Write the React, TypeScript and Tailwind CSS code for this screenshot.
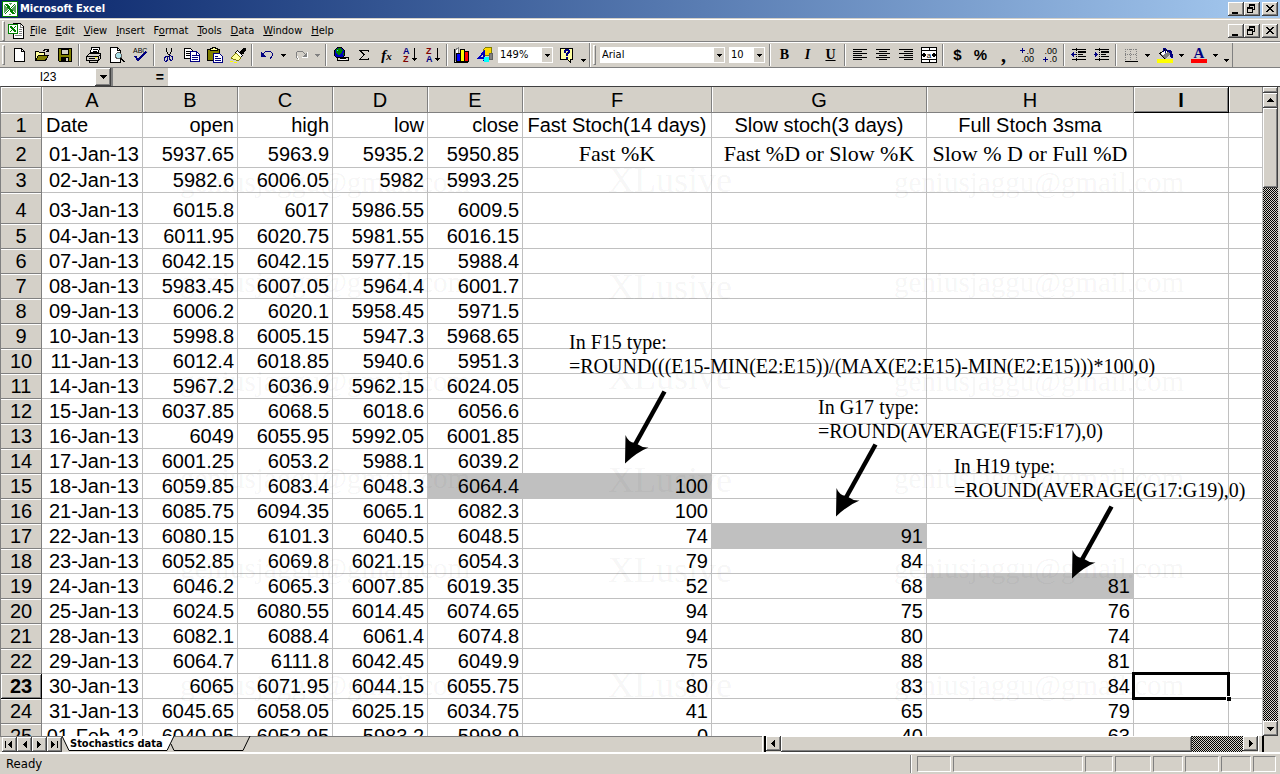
import * as React from "react"
import { clsx } from "clsx"

const RAISED =
  "bg-[#d4d0c8] shadow-[inset_-1px_-1px_0_#404040,inset_1px_1px_0_#fff,inset_-2px_-2px_0_#808080]"
const DITHER =
  "bg-[conic-gradient(#000_25%,#d4d0c8_0_50%,#000_0_75%,#d4d0c8_0)] bg-[length:2px_2px]"

/* ---------- sheet data ---------- */

const COLUMNS = ["A", "B", "C", "D", "E", "F", "G", "H", "I", ""]

const ROWS: string[][] = [
  ["Date", "open", "high", "low", "close", "Fast Stoch(14 days)", "Slow stoch(3 days)", "Full Stoch 3sma"],
  ["01-Jan-13", "5937.65", "5963.9", "5935.2", "5950.85", "Fast %K", "Fast %D or Slow %K", "Slow % D or Full %D"],
  ["02-Jan-13", "5982.6", "6006.05", "5982", "5993.25"],
  ["03-Jan-13", "6015.8", "6017", "5986.55", "6009.5"],
  ["04-Jan-13", "6011.95", "6020.75", "5981.55", "6016.15"],
  ["07-Jan-13", "6042.15", "6042.15", "5977.15", "5988.4"],
  ["08-Jan-13", "5983.45", "6007.05", "5964.4", "6001.7"],
  ["09-Jan-13", "6006.2", "6020.1", "5958.45", "5971.5"],
  ["10-Jan-13", "5998.8", "6005.15", "5947.3", "5968.65"],
  ["11-Jan-13", "6012.4", "6018.85", "5940.6", "5951.3"],
  ["14-Jan-13", "5967.2", "6036.9", "5962.15", "6024.05"],
  ["15-Jan-13", "6037.85", "6068.5", "6018.6", "6056.6"],
  ["16-Jan-13", "6049", "6055.95", "5992.05", "6001.85"],
  ["17-Jan-13", "6001.25", "6053.2", "5988.1", "6039.2"],
  ["18-Jan-13", "6059.85", "6083.4", "6048.3", "6064.4", "100"],
  ["21-Jan-13", "6085.75", "6094.35", "6065.1", "6082.3", "100"],
  ["22-Jan-13", "6080.15", "6101.3", "6040.5", "6048.5", "74", "91"],
  ["23-Jan-13", "6052.85", "6069.8", "6021.15", "6054.3", "79", "84"],
  ["24-Jan-13", "6046.2", "6065.3", "6007.85", "6019.35", "52", "68", "81"],
  ["25-Jan-13", "6024.5", "6080.55", "6014.45", "6074.65", "94", "75", "76"],
  ["28-Jan-13", "6082.1", "6088.4", "6061.4", "6074.8", "94", "80", "74"],
  ["29-Jan-13", "6064.7", "6111.8", "6042.45", "6049.9", "75", "88", "81"],
  ["30-Jan-13", "6065", "6071.95", "6044.15", "6055.75", "80", "83", "84"],
  ["31-Jan-13", "6045.65", "6058.05", "6025.15", "6034.75", "41", "65", "79"],
  ["01-Feb-13", "6040.95", "6052.95", "5983.2", "5998.9", "0", "40", "63"],
]

const SHADED = ["E15", "F15", "G17", "H19"]

/* ---------- small building blocks ---------- */

function Icon({ children, w = 16 }: { children: React.ReactNode; w?: number }) {
  return (
    <svg
      width={w}
      height={16}
      viewBox={`0 0 ${w} 16`}
      fill="none"
      stroke="#000"
      shapeRendering="crispEdges"
      className="shrink-0"
      aria-hidden="true"
    >
      {children}
    </svg>
  )
}

function Tool({ label, children }: { label: string; children: React.ReactNode }) {
  return (
    <button type="button" aria-label={label} className="flex h-[22px] w-[23px] shrink-0 items-center justify-center">
      {children}
    </button>
  )
}

function Sep() {
  return <div className="mx-[2px] h-[22px] w-[2px] shrink-0 border-l border-r border-l-[#808080] border-r-white" />
}

function Grip() {
  return <div className="ml-[2px] mr-[2px] h-5 w-[3px] shrink-0 border border-b-[#808080] border-l-white border-r-[#808080] border-t-white" />
}

function DownTriangle() {
  return (
    <svg width="5" height="3" viewBox="0 0 5 3" shapeRendering="crispEdges" aria-hidden="true">
      <path d="M0 0h5v1H0zM1 1h3v1H1zM2 2h1v1H2z" fill="currentColor" />
    </svg>
  )
}

function Drop({ label, muted }: { label: string; muted?: boolean }) {
  return (
    <button
      type="button"
      aria-label={label}
      className={clsx("flex h-[22px] w-[11px] shrink-0 items-center justify-center", muted && "text-[#808080]")}
    >
      <DownTriangle />
    </button>
  )
}

function More({ label }: { label: string }) {
  return (
    <button type="button" aria-label={label} className="flex h-[22px] w-[11px] shrink-0 items-end justify-center pb-1">
      <DownTriangle />
    </button>
  )
}

function Combo({ label, value, className }: { label: string; value: string; className: string }) {
  return (
    <div className={clsx("flex h-4 shrink-0 border border-white bg-white", className)}>
      <input
        aria-label={label}
        defaultValue={value}
        className="min-w-0 flex-1 bg-white pl-[1px] text-[11px] leading-[14px] outline-none"
      />
      <button type="button" aria-label={`${label} list`} className="flex w-[10px] items-center justify-center bg-[#d4d0c8]">
        <DownTriangle />
      </button>
    </div>
  )
}

function WindowButtons({ name }: { name: string }) {
  return (
    <div className="flex">
      <button type="button" aria-label={`Minimize ${name}`} className={clsx("h-[14px] w-4", RAISED)}>
        <svg width="16" height="14" shapeRendering="crispEdges">
          <path d="M4 10h6v2H4z" />
        </svg>
      </button>
      <button type="button" aria-label={`Restore ${name}`} className={clsx("h-[14px] w-4", RAISED)}>
        <svg width="16" height="14" shapeRendering="crispEdges" fill="none" stroke="#000">
          <path d="M5.500 5V2.500h5v5H9M5 3.500h6M3.500 5.500h5v5h-5zM3 6.500h6" />
        </svg>
      </button>
      <button type="button" aria-label={`Close ${name}`} className={clsx("ml-[2px] h-[14px] w-4", RAISED)}>
        <svg width="16" height="14" shapeRendering="crispEdges">
          <path d="M4 3h2v1h1v1h2V4h1V3h2v1h-1v1h-1v1H9v1h1v1h1v1h1v1h-2V9H9V8H7v1H6v1H4V9h1V8h1V7h1V6H6V5H5V4H4z" />
        </svg>
      </button>
    </div>
  )
}

function ExcelMark() {
  return (
    <svg width="16" height="16" viewBox="0 0 16 16" shapeRendering="crispEdges" className="shrink-0" aria-hidden="true">
      <path d="M0 0h16v16H0z" fill="#008000" />
      <path d="M1 1h14v14H1z" fill="#fff" />
      <path d="M2 2h12v12H2z" fill="#5fa05f" />
      <path d="M2 2h5l1 2 2-2h4v1l-4 5 4 5v1H9l-1-2-2 2H2v-1l4-5-4-5z" fill="#fff" />
      <path d="M3 3h3l7 10h-3zM12 3h1L4 13H3z" fill="#008000" />
    </svg>
  )
}

function DocumentMark() {
  return (
    <svg width="16" height="16" viewBox="0 0 16 16" shapeRendering="crispEdges" className="shrink-0" aria-hidden="true">
      <path d="M5.500.500h7l3 3v12h-10z" fill="#fff" stroke="#000" />
      <path d="M12.500 1v3H15M11 6.500h3M11 8.500h3M11 10.500h3M7 12.500h7" fill="none" stroke="#808080" />
      <path d="M0 1h10v10H0z" fill="#008000" />
      <path d="M1 2h8v8H1z" fill="#fff" />
      <path d="M2 3h2l4 5v1H6L2 4zM7 3h1L3 9H2z" fill="#008000" />
    </svg>
  )
}

/* ---------- toolbars ---------- */

function StandardToolbar() {
  return (
    <div role="toolbar" aria-label="Standard" className="flex items-center border-r border-r-[#808080]">
      <Grip />
      <Tool label="New">
        <Icon>
          <path d="M3.500 1.500h7l3 3v10h-10z" fill="#fff" />
          <path d="M10.500 1.500v3h3" />
        </Icon>
      </Tool>
      <Tool label="Open">
        <Icon>
          <path d="M1.500 13.500v-9h3l1 1h5v3" fill="#ffff9c" />
          <path d="M1.500 13.500l3-5h10l-3 5z" fill="#808000" />
          <path d="M9 3.500h1v-1h3v1h1v1M12 4.500h3M14.500 2v3" />
        </Icon>
      </Tool>
      <Tool label="Save">
        <Icon>
          <path d="M1.500 1.500h13v13h-12l-1-1z" fill="#808000" />
          <path d="M4.500 2h7v5h-7z" fill="#d4d0c8" />
          <path d="M4 10h8v5H4z" fill="#000" stroke="none" />
          <path d="M9 11h2v3H9z" fill="#d4d0c8" stroke="none" />
        </Icon>
      </Tool>
      <Sep />
      <Tool label="Print">
        <Icon>
          <path d="M4.500 5.500l1-5h8l-1 5z" fill="#fff" />
          <path d="M7 2.500h5M7 4.500h4" />
          <path d="M.500 9.500l3-3h11v5l-2 2h-12z" fill="#d4d0c8" />
          <path d="M1 9.500h12M12.500 13V9.500l2-2M3.500 13.500v2h8v-2M3 11.500h6" />
          <path d="M9 10h2v1H9z" fill="#ff0" stroke="none" />
        </Icon>
      </Tool>
      <Tool label="Print Preview">
        <Icon>
          <path d="M1.500.500h7l3 3v12h-10z" fill="#fff" />
          <path d="M8.500.500v3h3" />
          <circle cx="9.500" cy="8.500" r="3" fill="#a8e0e8" stroke="#606060" />
          <path d="M11 11l4 4M12 11l4 4" />
        </Icon>
      </Tool>
      <Tool label="Spelling">
        <Icon>
          <text x="1" y="6" fontSize="7" fill="#000" stroke="none" fontFamily="Liberation Sans, sans-serif">
            ABC
          </text>
          <path d="M3 9l3 4 8-8" stroke="#000080" strokeWidth="2" />
        </Icon>
      </Tool>
      <Sep />
      <Tool label="Cut">
        <Icon>
          <path d="M5.500 1v3l1 2 1 2M10.500 1v3l-1 2-1 2-1 2" />
          <path d="M6.500 9.500l-2 0-1 2v2l1 1h1l1-2zM8.500 8.500l3 1v3l-1 1h-1l-1-2z" stroke="#000080" />
        </Icon>
      </Tool>
      <Tool label="Copy">
        <Icon>
          <path d="M.500 1.500h6l2 2v8h-8z" fill="#fff" />
          <path d="M2 4.500h4M2 6.500h4M2 8.500h4" />
          <path d="M6.500 4.500h6l3 3v7h-9z" fill="#fff" stroke="#000080" />
          <path d="M8 8.500h4M8 10.500h6M8 12.500h6M12.500 5v3H15" stroke="#000080" />
        </Icon>
      </Tool>
      <Tool label="Paste">
        <Icon>
          <path d="M.500 2.500h12v11h-12z" fill="#808000" />
          <path d="M3.500 3.500v-2h2v-1h3v1h2v2z" fill="#ffff9c" />
          <path d="M6.500 6.500h6l3 3v6h-9z" fill="#fff" stroke="#000080" />
          <path d="M8 9.500h3M8 11.500h6M8 13.500h6" stroke="#000080" />
        </Icon>
      </Tool>
      <Tool label="Format Painter">
        <Icon>
          <path d="M10 5l4-4 2 1-3 5z" fill="#000" />
          <path d="M7.500 3.500l5 5-2 2-5-5z" fill="#fff" />
          <path d="M6 6l5 5-3 3-7-3z" fill="#ffff9c" stroke="#808000" />
          <path d="M0 14.500h3M4 15.500h3" stroke="#ff0" />
        </Icon>
      </Tool>
      <Sep />
      <Tool label="Undo">
        <Icon>
          <path d="M2 5v5h5l-2-2-1-1z" fill="#000080" stroke="none" />
          <path d="M3 8l4-4h4l2 2v3l-2 3" stroke="#000080" />
        </Icon>
      </Tool>
      <Drop label="Undo history" />
      <Tool label="Redo">
        <Icon>
          <path d="M14 5v5H9l2-2 1-1z" fill="#808080" stroke="none" />
          <path d="M13 8L9 4H5L3 6v3l2 3" stroke="#808080" />
          <path d="M14.500 5v5.500H9M6 12.500L4 9.500" stroke="#fff" />
        </Icon>
      </Tool>
      <Drop label="Redo history" muted />
      <Sep />
      <Tool label="Insert Hyperlink">
        <Icon>
          <circle cx="6.500" cy="6" r="5.500" fill="#0000c0" />
          <path d="M3 2l4-1 3 2-2 4-3 1-2-2zM9 7l2-1v3z" fill="#008000" stroke="none" />
          <path d="M3 4l2-2v2z" fill="#0ff" stroke="none" />
          <path d="M4.500 10.500h5v3h-5zM10.500 10.500h5v3h-5z" fill="#d4d0c8" />
          <path d="M7 12.500h6" stroke="#fff" />
          <path d="M7 11.500h6" />
        </Icon>
      </Tool>
      <Tool label="AutoSum">
        <Icon>
          <path d="M12.500 5V3.500h-9l5 4-5 5h9V11M4 4l4 4" />
        </Icon>
      </Tool>
      <Tool label="Paste Function">
        <span className="font-['Liberation_Serif',serif] text-[15px] leading-4 font-bold italic">
          f<span className="text-[11px]">x</span>
        </span>
      </Tool>
      <Tool label="Sort Ascending">
        <SortIcon top="A" bottom="Z" />
      </Tool>
      <Tool label="Sort Descending">
        <SortIcon top="Z" bottom="A" />
      </Tool>
      <Sep />
      <Tool label="Chart Wizard">
        <Icon>
          <path d="M.500 2v13.500H14" />
          <path d="M1 3l3-2v12H1z" fill="#fff" stroke="#808080" />
          <path d="M2.500 6.500h4v8h-4z" fill="#0000ff" />
          <path d="M6.500 2.500h4v12h-4z" fill="#ff0" />
          <path d="M10.500 4.500h4v10h-4z" fill="#f00" />
        </Icon>
      </Tool>
      <Tool label="Drawing">
        <Icon>
          <path d="M6.500 2.500l2-2h6v6l-2 2h-6z" fill="#ffd800" stroke="#808000" />
          <path d="M12.500 6.500h3v6h-3z" fill="#808080" stroke="#606060" />
          <path d="M1 12l6-7v9M2 10.500h6" stroke="#0000c0" strokeWidth="2" />
          <circle cx="9.500" cy="12.500" r="3" fill="#0ff" stroke="none" />
        </Icon>
      </Tool>
      <Combo label="Zoom" value="149%" className="mx-[2px] w-[55px]" />
      <Tool label="Help">
        <Icon>
          <path d="M1.500 1.500h12v11h-2v3l-3-3h-7z" fill="#ffffa0" />
          <path d="M5 3h1V2h4v1h1v3h-1v1H9v2H7V6h1V5h1V4H7v2H5zM7 10h2v2H7z" fill="#000080" stroke="none" />
        </Icon>
      </Tool>
      <More label="More standard buttons" />
    </div>
  )
}

function SortIcon({ top, bottom }: { top: string; bottom: string }) {
  return (
    <Icon>
      <g fontFamily="Liberation Sans, sans-serif" fontSize="9" fontWeight="bold" stroke="none">
        <text x="1" y="7" fill={top === "A" ? "#000080" : "#800000"}>
          {top}
        </text>
        <text x="1" y="15" fill={bottom === "A" ? "#000080" : "#800000"}>
          {bottom}
        </text>
      </g>
      <path d="M12.500 1v13M10 11.500h5M11 12.500h3M12 13.500h1" />
    </Icon>
  )
}

function AlignIcon({ d }: { d: string }) {
  return (
    <Icon>
      <path d={d} />
    </Icon>
  )
}

function DecimalIcon({ increase }: { increase?: boolean }) {
  return (
    <Icon>
      {increase ? (
        <path d="M1 3.500h5M3.500 1v5" stroke="#000080" />
      ) : (
        <path d="M1 12.500h5M3.500 10v5" stroke="#000080" />
      )}
      <g fontFamily="Liberation Sans, sans-serif" fontSize="9" fill="#000" stroke="none">
        <text x="15" y="7" textAnchor="end">{increase ? ".0" : ".00"}</text>
        <text x="15" y="15" textAnchor="end">{increase ? ".00" : ".0"}</text>
      </g>
    </Icon>
  )
}

function IndentIcon({ increase }: { increase?: boolean }) {
  return (
    <Icon>
      <path d="M1 2.500h14M7 5.500h8M7 7.500h5M7 9.500h8M1 12.500h14" />
      <path d="M7 4h8v1H7z" fill="#000" stroke="none" />
      <path d="M5.500 1v14" strokeDasharray="1 1" />
      {increase ? (
        <path d="M0 7.500h4M2.500 6v3M1.500 5v5" stroke="#000080" />
      ) : (
        <path d="M0 7.500h5M1.500 6v3M2.500 5v5" stroke="#000080" />
      )}
    </Icon>
  )
}

function FormattingToolbar() {
  return (
    <div
      role="toolbar"
      aria-label="Formatting"
      className="flex items-center border-l border-r border-l-white border-r-[#808080]"
    >
      <Grip />
      <Combo label="Font" value="Arial" className="ml-[2px] w-[125px]" />
      <Combo label="Font Size" value="10" className="mr-[2px] ml-1 w-9" />
      <Sep />
      <Tool label="Bold">
        <span className="font-['Liberation_Serif',serif] text-sm leading-4 font-bold">B</span>
      </Tool>
      <Tool label="Italic">
        <span className="font-['Liberation_Serif',serif] text-sm leading-4 font-bold italic">I</span>
      </Tool>
      <Tool label="Underline">
        <span className="font-['Liberation_Serif',serif] text-sm leading-4 font-bold underline">U</span>
      </Tool>
      <Sep />
      <Tool label="Align Left">
        <AlignIcon d="M1 2.500h14M1 4.500h9M1 6.500h14M1 8.500h9M1 10.500h14M1 12.500h9" />
      </Tool>
      <Tool label="Center">
        <AlignIcon d="M1 2.500h14M4 4.500h8M1 6.500h14M4 8.500h8M1 10.500h14M4 12.500h8" />
      </Tool>
      <Tool label="Align Right">
        <AlignIcon d="M1 2.500h14M6 4.500h9M1 6.500h14M6 8.500h9M1 10.500h14M6 12.500h9" />
      </Tool>
      <Tool label="Merge and Center">
        <Icon>
          <path d="M.500.500h15v15h-15zM0 3.500h16M0 12.500h16M8 0v3M8 13v3" fill="#fff" />
          <path d="M1 8h4M11 8h4M3 6v4M13 6v4" strokeWidth="2" />
          <text x="8" y="11" fontSize="8" textAnchor="middle" fill="#000" stroke="none" fontFamily="Liberation Sans, sans-serif">
            a
          </text>
        </Icon>
      </Tool>
      <Sep />
      <Tool label="Currency Style">
        <span className="font-['Liberation_Sans',Arial,sans-serif] text-[15px] leading-4 font-bold">$</span>
      </Tool>
      <Tool label="Percent Style">
        <span className="font-['Liberation_Sans',Arial,sans-serif] text-[15px] leading-4 font-bold">%</span>
      </Tool>
      <Tool label="Comma Style">
        <span className="font-['Liberation_Serif',serif] text-xl leading-4 font-bold">,</span>
      </Tool>
      <Tool label="Increase Decimal">
        <DecimalIcon increase />
      </Tool>
      <Tool label="Decrease Decimal">
        <DecimalIcon />
      </Tool>
      <Sep />
      <Tool label="Decrease Indent">
        <IndentIcon />
      </Tool>
      <Tool label="Increase Indent">
        <IndentIcon increase />
      </Tool>
      <Sep />
      <Tool label="Borders">
        <Icon>
          <path d="M2 2.500h12M2 7.500h12M2.500 2v11M7.500 2v11M13.500 2v11" stroke="#808080" strokeDasharray="1 1" />
          <path d="M2 14.500h13" />
        </Icon>
      </Tool>
      <Drop label="Border styles" />
      <Tool label="Fill Color">
        <Icon>
          <path d="M3 6.500l5-4 5 4-5 5z" fill="#fff" />
          <path d="M3 7l3 1 5-3 2 2-5 5z" fill="#808080" stroke="none" />
          <path d="M6.500 5V1.500h2V6" stroke="#000080" />
          <path d="M10 3l4 1 1 3v3h-1l-1-4z" fill="#000080" stroke="#000080" />
          <path d="M0 12h16v4H0z" fill="#ff0" stroke="none" />
        </Icon>
      </Tool>
      <Drop label="Fill colors" />
      <Tool label="Font Color">
        <Icon>
          <text x="8" y="11" fontSize="15" fontWeight="bold" textAnchor="middle" fill="#000080" stroke="none" fontFamily="Liberation Serif, serif">
            A
          </text>
          <path d="M0 12h16v4H0z" fill="#f00" stroke="none" />
        </Icon>
      </Tool>
      <Drop label="Font colors" />
      <More label="More formatting buttons" />
    </div>
  )
}

function MenuBar() {
  // [text before the access key, access key, rest]
  const items = [
    ["", "F", "ile"],
    ["", "E", "dit"],
    ["", "V", "iew"],
    ["", "I", "nsert"],
    ["F", "o", "rmat"],
    ["", "T", "ools"],
    ["", "D", "ata"],
    ["", "W", "indow"],
    ["", "H", "elp"],
  ]
  return (
    <div className="flex h-[23px] items-center justify-between border-t border-b border-t-white border-b-[#808080] pr-[2px]">
      <nav className="flex items-center">
        <Grip />
        <span className="mr-[2px] ml-[1px]">
          <DocumentMark />
        </span>
        {items.map(([pre, key, rest]) => (
          <button key={key} type="button" className="pr-[5px] pl-1 leading-4">
            {pre}
            <span className="underline underline-offset-1">{key}</span>
            {rest}
          </button>
        ))}
      </nav>
      <WindowButtons name="workbook" />
    </div>
  )
}

function FormulaBar() {
  return (
    <div className="flex h-[18px] bg-white">
      <input
        aria-label="Name Box"
        defaultValue="I23"
        className="ml-[1px] w-[94px] bg-white text-center font-['Liberation_Sans',Arial,sans-serif] text-xs outline-none"
      />
      <button type="button" aria-label="Name list" className={clsx("flex w-4 items-center justify-center", RAISED)}>
        <svg width="7" height="4" viewBox="0 0 7 4" shapeRendering="crispEdges" aria-hidden="true">
          <path d="M0 0h7v1H0zM1 1h5v1H1zM2 2h3v1H2zM3 3h1v1H3z" />
        </svg>
      </button>
      <div className="flex w-[57px] items-center justify-end border-l-2 border-l-[#808080] bg-[#d4d0c8] pr-1">
        <button type="button" aria-label="Edit Formula" className="font-['Liberation_Sans',Arial,sans-serif] text-sm leading-4 font-bold">
          =
        </button>
      </div>
      <input aria-label="Formula" className="min-w-0 flex-1 bg-white px-1 outline-none" />
    </div>
  )
}

/* ---------- sheet ---------- */

function Cell({ col, row, value }: { col: number; row: number; value?: string }) {
  const ref = `${COLUMNS[col]}${row}`
  const align = ref === "A1" ? "pl-1 text-left" : col < 5 || row > 2 ? "pr-[3px] text-right" : "text-center"
  return (
    <td
      className={clsx(
        "border-r border-b border-[#c0c0c0] px-0 pt-0 align-bottom whitespace-nowrap",
        align,
        row === 2 || row === 4 ? "pb-[1px]" : "pb-0",
        SHADED.includes(ref) && "bg-[#c0c0c0]",
        row === 2 && col > 4 && "font-['Liberation_Serif','Times_New_Roman',serif] text-[22px]",
        ref === "I23" && "relative"
      )}
    >
      {value}
      {ref === "I23" && (
        <div className="absolute -top-[2px] -right-[2px] -bottom-[2px] -left-[2px] border-[3px] border-black">
          <span className="absolute -right-1 -bottom-1 size-[5px] border-t border-l border-white bg-black" />
        </div>
      )}
    </td>
  )
}

function Sheet() {
  return (
    <table className="w-full table-fixed border-separate border-spacing-0 font-['Liberation_Sans',Arial,sans-serif] text-xl leading-6">
      <colgroup>
        <col className="w-[41px]" />
        <col className="w-[101px]" />
        <col className="w-[95px]" />
        <col className="w-[95px]" />
        <col className="w-[95px]" />
        <col className="w-[95px]" />
        <col className="w-[189px]" />
        <col className="w-[215px]" />
        <col className="w-[207px]" />
        <col className="w-[95px]" />
        <col />
      </colgroup>
      <thead>
        <tr className="h-[26px]">
          <th className="border-r border-b border-[#808080] bg-[#d4d0c8] p-0 shadow-[inset_1px_1px_0_#fff]" />
          {COLUMNS.map((name) => (
            <th
              key={name}
              scope="col"
              className={clsx(
                "border-r border-b bg-[#d4d0c8] p-0",
                name === "I"
                  ? "border-black font-bold shadow-[inset_1px_1px_0_#fff,inset_-1px_-1px_0_#808080]"
                  : "border-[#808080] font-normal shadow-[inset_1px_0_0_#fff]"
              )}
            >
              {name}
            </th>
          ))}
        </tr>
      </thead>
      <tbody>
        {ROWS.map((cells, i) => {
          const row = i + 1
          return (
            <tr key={row} className={row === 2 ? "h-[30px]" : row === 4 ? "h-[31px]" : "h-[25px]"}>
              <th
                scope="row"
                className={clsx(
                  "border-r border-b bg-[#d4d0c8] px-0 pt-0 align-bottom",
                  row === 2 || row === 4 ? "pb-[1px]" : "pb-0",
                  row === 23
                    ? "border-black font-bold shadow-[inset_1px_1px_0_#fff,inset_-1px_-1px_0_#808080]"
                    : "border-[#808080] font-normal shadow-[inset_0_1px_0_#fff]"
                )}
              >
                {row}
              </th>
              {COLUMNS.map((name, col) => (
                <Cell key={name} col={col} row={row} value={cells[col]} />
              ))}
            </tr>
          )
        })}
      </tbody>
    </table>
  )
}

function Arrow({ className }: { className: string }) {
  return (
    <svg width="44" height="76" viewBox="0 0 44 76" className={clsx("absolute", className)} aria-hidden="true">
      <path d="M40.500 1.500L8 60" stroke="#000" strokeWidth="4.500" />
      <path d="M1 73.500L1.500 45Q4 52 11 53L15 55Q19 58 24.500 57.500Q13 62 1 73.500z" />
    </svg>
  )
}

function Note({ cell, formula, className }: { cell: string; formula: string; className: string }) {
  return (
    <p className={clsx("absolute text-xl leading-6 whitespace-nowrap", className)}>
      In {cell} type:
      <br />
      {formula}
    </p>
  )
}

// [top of the mail address, top of the name]
const WATERMARKS = [
  [79, 77],
  [179, 184],
  [278, 274],
  [375, 377],
  [465, 467],
  [582, 582],
]

function Annotations() {
  return (
    <div className="pointer-events-none absolute inset-0 font-['Liberation_Serif','Times_New_Roman',serif]">
      {WATERMARKS.map(([mail, name]) => (
        <div key={mail} className="text-[29px] leading-8 text-black/5">
          <span className="absolute left-[179px]" style={{ top: mail }}>
            geniusjaggu@gmail.com
          </span>
          <span className="absolute left-[607px] text-4xl leading-8" style={{ top: name }}>
            XLusive
          </span>
          <span className="absolute left-[893px]" style={{ top: mail }}>
            geniusjaggu@gmail.com
          </span>
        </div>
      ))}
      <Note
        cell="F15"
        formula="=ROUND(((E15-MIN(E2:E15))/(MAX(E2:E15)-MIN(E2:E15)))*100,0)"
        className="top-[243px] left-[568px]"
      />
      <Arrow className="top-[303px] left-[623px]" />
      <Note cell="G17" formula="=ROUND(AVERAGE(F15:F17),0)" className="top-[308px] left-[817px]" />
      <Arrow className="top-[356px] left-[834px]" />
      <Note cell="H19" formula="=ROUND(AVERAGE(G17:G19),0)" className="top-[367px] left-[953px]" />
      <Arrow className="top-[418px] left-[1070px]" />
    </div>
  )
}

const TRIANGLES = {
  up: "M7 5h1v1H7zM6 6h3v1H6zM5 7h5v1H5zM4 8h7v1H4z",
  down: "M4 6h7v1H4zM5 7h5v1H5zM6 8h3v1H6zM7 9h1v1H7z",
  left: "M8 4v7h1V4zM7 5v5h1V5zM6 6v3h1V6zM5 7v1h1V7z",
  right: "M6 4v7h1V4zM7 5v5h1V5zM8 6v3h1V6zM9 7v1h1V7z",
  first: "M3 4h1v7H3zM9 4h1v7H9zM8 5h1v5H8zM7 6h1v3H7zM6 7h1v1H6z",
  previous: "M9 4h1v7H9zM8 5h1v5H8zM7 6h1v3H7zM6 7h1v1H6z",
  next: "M5 4h1v7H5zM6 5h1v5H6zM7 6h1v3H7zM8 7h1v1H8z",
  last: "M4 4h1v7H4zM5 5h1v5H5zM6 6h1v3H6zM7 7h1v1H7zM10 4h1v7h-1z",
}

function ScrollButton({ label, dir }: { label: string; dir: keyof typeof TRIANGLES }) {
  return (
    <button type="button" aria-label={label} className={clsx("h-[15px] w-[15px] shrink-0", RAISED)}>
      <svg width="15" height="15" viewBox="0 0 15 15" shapeRendering="crispEdges" aria-hidden="true">
        <path d={TRIANGLES[dir]} />
      </svg>
    </button>
  )
}

function VerticalScroll() {
  return (
    <div className="flex w-[17px] shrink-0 flex-col bg-[#d4d0c8] pr-[2px]">
      <div className={clsx("h-[6px]", RAISED)} />
      <ScrollButton label="Scroll up" dir="up" />
      <div className={clsx("flex min-h-0 flex-1 flex-col", DITHER)}>
        <div className={clsx("h-[80px]", RAISED)} />
      </div>
      <ScrollButton label="Scroll down" dir="down" />
    </div>
  )
}

function TabStrip() {
  return (
    <div className="flex h-4 items-stretch">
      <div className="flex w-[59.5%] border-t border-t-[#808080] pl-[2px]">
        <ScrollButton label="First sheet" dir="first" />
        <ScrollButton label="Previous sheet" dir="previous" />
        <ScrollButton label="Next sheet" dir="next" />
        <ScrollButton label="Last sheet" dir="last" />
        <button type="button" className="relative -mt-px h-4 w-[112px] shrink-0 text-left">
          <svg width="190" height="15" viewBox="0 0 190 15" className="absolute top-0 left-0" aria-hidden="true">
            <path d="M0 0L7 14.500H105L112 0z" fill="#fff" />
            <path d="M0 0L7 14.500H105L112 0M109 8L112 14.500H181L188 0" fill="none" stroke="#000" />
          </svg>
          <span className="relative pl-2 font-bold">Stochastics data</span>
        </button>
      </div>
      <div className="flex flex-1">
        <div className="w-1 border-r-2 border-l border-r-black border-l-white" />
        <ScrollButton label="Scroll left" dir="left" />
        <div className={clsx("flex min-w-0 flex-1", DITHER)}>
          <div className={clsx("w-[89%]", RAISED)} />
        </div>
        <ScrollButton label="Scroll right" dir="right" />
        <div className="mr-4 w-[6px] border-r-2 border-l border-r-black border-l-white" />
      </div>
    </div>
  )
}

function StatusBar() {
  return (
    <footer className="flex h-[22px] items-center border-t-2 border-t-white pr-1 pl-[6px]">
      <span className="flex-1 text-[13px] leading-4">Ready</span>
      <div className="mr-[5px] h-[18px] w-[2px] border-l border-r border-l-[#808080] border-r-white" />
      <div className="flex gap-[2px]">
        {["w-[34px]", "w-[130px]", "w-7", "w-9", "w-[30px]", "w-[34px]", "w-[30px]", "w-[23px]"].map((w, i) => (
          <div key={i} className={clsx("h-4 border border-t-[#808080] border-r-white border-b-white border-l-[#808080]", w)} />
        ))}
      </div>
    </footer>
  )
}

export default function App() {
  return (
    <div className="flex h-screen flex-col overflow-hidden bg-[#d4d0c8] font-['DejaVu_Sans_Condensed',Tahoma,sans-serif] text-[11px] text-black">
      <header className="flex h-[18px] items-center justify-between bg-linear-to-r from-[#0a246a] to-[#a6caf0] pr-[2px] pl-[2px]">
        <h1 className="flex items-center gap-[2px] leading-4 font-bold text-white">
          <ExcelMark />
          Microsoft Excel
        </h1>
        <WindowButtons name="Microsoft Excel" />
      </header>
      <div className="pt-[1px]">
        <MenuBar />
      </div>
      <div className="flex h-[26px] border-t border-b border-t-white border-b-[#808080]">
        <StandardToolbar />
        <FormattingToolbar />
      </div>
      <FormulaBar />
      <main className="relative flex min-h-0 flex-1 overflow-hidden border-t border-t-[#404040] border-l border-l-[#808080] bg-white">
        <div className="min-w-0 flex-1 overflow-hidden">
          <Sheet />
        </div>
        <VerticalScroll />
        <Annotations />
      </main>
      <TabStrip />
      <StatusBar />
    </div>
  )
}
